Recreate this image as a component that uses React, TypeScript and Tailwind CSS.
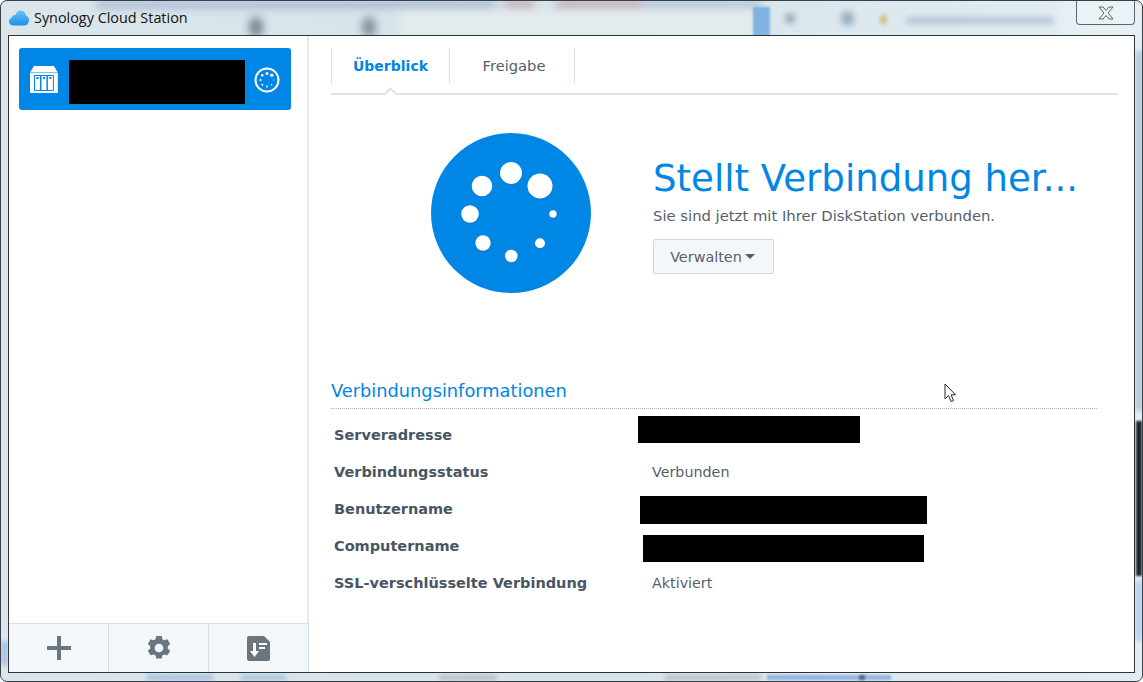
import { ReactNode } from 'react';

const Row = ({ label, children }: { label: string; children: ReactNode }) => (
  <div className="flex h-[37px] items-center">
    <span className="w-[321px] pl-[3px] text-[14.5px] font-bold text-[#4a5563]">{label}</span>
    {children}
  </div>
);

const Redact = ({ className }: { className: string }) => <div className={`self-start bg-black ${className}`} />;

const Spinner = () => (
  <svg viewBox="0 0 160 160" className="h-40 w-40">
    <circle cx="80" cy="80" r="80" fill="#0086e5" />
    {[
      [80, 40, 11],
      [109, 53, 12.5],
      [51, 53, 10.3],
      [39, 81, 8.8],
      [52, 110, 7.7],
      [80.3, 123, 6.3],
      [109, 110.3, 5],
      [122, 81, 3.7],
    ].map(([x, y, r]) => (
      <g key={`${x}-${y}`}>
        <circle cx={x} cy={y + 1} r={r} fill="#0068b4" opacity="0.55" />
        <circle cx={x} cy={y} r={r} fill="#fff" />
      </g>
    ))}
  </svg>
);

const NasIcon = () => (
  <svg viewBox="0 0 28 27" className="h-[27px] w-7">
    <path d="M4 0h20l4 6.500H0z" fill="#fff" />
    <rect y="7" width="28" height="20" fill="#fff" />
    <rect x="4" y="9" width="20" height="16" fill="#0086e5" />
    {[5, 11.500, 18].map((x) => (
      <g key={x}>
        <rect x={x} y="10" width="5" height="14" fill="#fff" />
        <rect x={x + 1.5} y="11" width="2" height="2" fill="#0086e5" />
      </g>
    ))}
  </svg>
);

const SmallSpinner = () => (
  <svg viewBox="0 0 26 26" className="h-[26px] w-[26px]">
    <circle cx="13" cy="13" r="11.5" fill="none" stroke="#fff" strokeWidth="2" />
    {[
      [13, 6.5, 1.5],
      [17.8, 8.2, 1.6],
      [8.2, 8.2, 1.3],
      [6.5, 13, 1.1],
      [8.4, 17.8, 1],
      [13, 19.5, 0.9],
      [17.6, 17.8, 0.8],
      [19.4, 13, 0.6],
    ].map(([x, y, r]) => (
      <circle key={`${x}-${y}`} cx={x} cy={y} r={r} fill="#fff" />
    ))}
  </svg>
);

const CloudIcon = () => (
  <svg viewBox="0 0 20 16" className="h-4 w-5">
    <defs>
      <linearGradient id="cloud" x1="0" y1="0" x2="0" y2="1">
        <stop offset="0" stopColor="#6cc0f5" />
        <stop offset="1" stopColor="#1d8fe6" />
      </linearGradient>
    </defs>
    <path
      d="M4 15.500C1.600 15.500 0 13.800 0 11.600c0-1.800 1-3.200 2.600-3.700C3 5.900 4.600 4.800 6.400 5 7.200 2.300 9.300.5 11.800.5c2.700 0 4.800 2 5 4.700 1.900.6 3.200 2.400 3.200 4.700 0 3.200-2.200 5.600-5 5.600z"
      fill="url(#cloud)"
    />
  </svg>
);

const ToolButton = ({ children }: { children: ReactNode }) => (
  <div className="flex h-full w-[100px] shrink-0 items-center justify-center border-r border-[#d5e0ea]">{children}</div>
);

export default function App() {
  return (
    <div className="relative flex h-[682px] w-[1143px] flex-col overflow-hidden rounded-[7px] border border-[#3a4046] bg-gradient-to-r from-[#dbe6ec] via-[#d6e3ea] to-[#e2edf3] font-['DejaVu_Sans',sans-serif]">
      {/* blurred desktop behind the glass frame */}
      <div className="absolute left-[95px] top-0 h-[7px] w-[400px] bg-[#7f97bd] opacity-60 blur-[4px]" />
      <div className="absolute left-[503px] top-0 h-[7px] w-[30px] bg-[#a8606c] opacity-50 blur-[4px]" />
      <div className="absolute left-[555px] top-0 h-[7px] w-[87px] bg-[#a8606c] opacity-50 blur-[4px]" />
      <div className="absolute left-[642px] top-0 h-[7px] w-[120px] bg-[#8aa7c9] opacity-60 blur-[4px]" />
      <div className="absolute left-[400px] top-[10px] h-[24px] w-[352px] bg-[#eef1ee] opacity-60 blur-[5px]" />
      <div className="absolute left-[248px] top-[16px] h-[20px] w-[14px] rounded-full bg-[#3c4a58] opacity-60 blur-[4px]" />
      <div className="absolute left-[361px] top-[16px] h-[20px] w-[14px] rounded-full bg-[#4b5a66] opacity-60 blur-[4px]" />
      <div className="absolute left-[752px] top-[6px] h-[30px] w-[17px] bg-[#78aee0] opacity-90 blur-[1px]" />
      <div className="absolute left-[784px] top-[13px] h-[9px] w-[10px] rounded-full bg-[#6b7f92] opacity-70 blur-[3px]" />
      <div className="absolute left-[840px] top-[10px] h-[15px] w-[13px] rounded-full bg-[#7b98ae] opacity-70 blur-[3px]" />
      <div className="absolute left-[879px] top-[14px] h-[9px] w-[7px] rounded-full bg-[#c9b452] opacity-80 blur-[2px]" />
      <div className="absolute left-[905px] top-[17px] h-[5px] w-[148px] rounded-full bg-[#7d96b8] opacity-60 blur-[3px]" />
      <div className="absolute left-[1060px] top-0 h-[36px] w-[80px] bg-[#eef3f5] opacity-60 blur-[6px]" />
      <div className="absolute bottom-[1px] left-[146px] h-[5px] w-[66px] bg-[#8fb6dc] opacity-80 blur-[2px]" />
      <div className="absolute bottom-[1px] left-[240px] h-[5px] w-[45px] bg-[#8fb6dc] opacity-70 blur-[2px]" />
      <div className="absolute bottom-[1px] left-[438px] h-[5px] w-[58px] bg-[#a9b0b4] opacity-70 blur-[2px]" />
      <div className="absolute bottom-[1px] left-[664px] h-[5px] w-[96px] bg-[#a9b0b4] opacity-70 blur-[2px]" />
      <div className="absolute bottom-[1px] left-[766px] h-[5px] w-[124px] bg-[#8fb0de] opacity-90 blur-[1px]" />
      <div className="absolute bottom-[1px] left-[858px] h-[5px] w-[6px] bg-[#4a5560] opacity-80 blur-[1px]" />
      <div className="absolute right-0 top-[50px] h-[360px] w-[6px] bg-[#9db3cc] opacity-70 blur-[2px]" />
      <div className="absolute right-0 top-[420px] h-[155px] w-[6px] bg-[#20262f] blur-[1px]" />
      <div className="absolute right-0 top-[580px] h-[60px] w-[6px] bg-[#a9c6ea] opacity-80 blur-[2px]" />
      <div className="absolute left-0 top-[640px] h-[24px] w-[7px] bg-[#8fb6dc] opacity-70 blur-[2px]" />

      <div className="relative flex h-[34px] shrink-0 items-start justify-between pl-[8px] pr-[7px]">
        <div className="flex h-full items-center gap-[5px]">
          <CloudIcon />
          <span className="font-['Open_Sans',sans-serif] text-[14.4px] text-[#111]">Synology Cloud Station</span>
        </div>
        <div className="flex h-[24px] w-[59px] items-center justify-center rounded-b-[4px] border border-t-0 border-[#5a6672] bg-white/10">
          <svg viewBox="0 0 16 14" className="h-[14px] w-[16px]">
            <path
              d="M1 1h4l3 3.500L11 1h4l-5 6 5 6h-4L8 9.500 5 13H1l5-6z"
              fill="#eef2f5"
              stroke="#59636d"
              strokeWidth="1"
            />
          </svg>
        </div>
      </div>

      <div className="relative mx-[7px] mb-[8px] flex min-h-0 flex-1 border border-[#2e3338] bg-white">
        <aside className="flex w-[300px] shrink-0 flex-col">
          <div className="flex-1 border-r-2 border-[#e6e8ea] px-[10px] pt-[12px]">
            <div className="flex h-[62px] w-[272px] items-center rounded-[3px] bg-[#0086e5] px-[11px]">
              <NasIcon />
              <div className="ml-[11px] mt-[6px] h-[44px] w-[177px] bg-black" />
              <div className="ml-[9px] mt-[1px]">
                <SmallSpinner />
              </div>
            </div>
          </div>
          <div className="flex h-[49px] border-t border-[#d5e0ea] bg-[#f3f7fa]">
            <ToolButton>
              <svg viewBox="0 0 26 26" className="h-[26px] w-[26px]">
                <path d="M11 1h4v10h10v4H15v10h-4V15H1v-4h10z" fill="#6b7580" />
              </svg>
            </ToolButton>
            <ToolButton>
              <svg viewBox="0 0 24 24" className="h-[26px] w-[26px]">
                <path
                  fillRule="evenodd"
                  d="M9.500 1h5l.7 3c.6.2 1.200.5 1.700.9l2.900-.9 2.500 4.300-2.200 2.100a7 7 0 0 1 0 2l2.200 2.100-2.500 4.300-2.900-.9c-.5.400-1.100.7-1.700.9l-.7 3h-5l-.7-3c-.6-.2-1.200-.5-1.700-.9l-2.900.9-2.500-4.300 2.200-2.100a7 7 0 0 1 0-2L1.700 8.300 4.200 4l2.900.9c.5-.4 1.100-.7 1.700-.9zM12 8a4 4 0 1 0 0 8 4 4 0 0 0 0-8z"
                  fill="#6b7580"
                />
              </svg>
            </ToolButton>
            <ToolButton>
              <svg viewBox="0 0 24 25" className="h-[25px] w-[24px]">
                <path d="M2 0h15l6 6v17a2 2 0 0 1-2 2H2a2 2 0 0 1-2-2V2a2 2 0 0 1 2-2z" fill="#6b7580" />
                <path d="M6 7h3v8h3l-4.500 6L3 15h3z" fill="#fff" />
                <rect x="12" y="7" width="8" height="2" fill="#fff" />
                <rect x="12" y="11" width="6" height="2" fill="#fff" />
              </svg>
            </ToolButton>
          </div>
        </aside>

        <main className="relative flex-1 pl-[22px] pr-[16px] pt-[12px]">
          <div className="relative flex h-[34px]">
            <div className="flex h-[35px] w-[119px] items-center justify-center border-x border-[#d5dfe8] pt-[2px] text-[14px] font-bold text-[#0086e5]">
              Überblick
            </div>
            <div className="flex h-[35px] w-[125px] items-center justify-center border-r border-[#d5dfe8] pl-[4px] pt-[1px] text-[14.7px] text-[#555f6b]">
              Freigabe
            </div>
          </div>
          <div className="relative mt-[11px] h-[2px] bg-[#e2e4e6]">
            <div className="absolute left-[55px] top-[-4px] h-[9px] w-[9px] rotate-45 border-l-2 border-t-2 border-[#e2e4e6] bg-white" />
          </div>

          <div className="mt-[38px] flex pl-[100px]">
            <Spinner />
            <div className="ml-[62px] pt-[24px]">
              <h1 className="text-[37.1px] leading-[44px] text-[#0086e5]">Stellt Verbindung her...</h1>
              <p className="mt-[5px] text-[14.8px] leading-[20px] text-[#555f6b]">
                Sie sind jetzt mit Ihrer DiskStation verbunden.
              </p>
              <button className="mt-[13px] flex h-[35px] w-[121px] items-center justify-center gap-[3px] rounded-[2px] border border-[#ced9e4] bg-[#f3f7fa] pr-[2px] pt-[2px] text-[14.4px] text-[#555f6b]">
                Verwalten
                <span className="mb-[3px] h-0 w-0 border-x-[5px] border-t-[5px] border-x-transparent border-t-[#555f6b]" />
              </button>
            </div>
          </div>

          <h2 className="mt-[85px] w-[766px] border-b border-dotted border-[#b4b8bc] pb-[4px] text-[17.8px] leading-[26px] text-[#0086e5]">
            Verbindungsinformationen
          </h2>
          <div className="mt-[8px]">
            <Row label="Serveradresse">
              <Redact className="ml-[-14px] mt-[-1px] h-[27px] w-[222px]" />
            </Row>
            <Row label="Verbindungsstatus">
              <span className="text-[14.3px] text-[#555f6b]">Verbunden</span>
            </Row>
            <Row label="Benutzername">
              <Redact className="ml-[-12px] mt-[5px] h-[28px] w-[287px]" />
            </Row>
            <Row label="Computername">
              <Redact className="ml-[-9px] mt-[7px] h-[27px] w-[281px]" />
            </Row>
            <Row label="SSL-verschlüsselte Verbindung">
              <span className="text-[14.3px] text-[#555f6b]">Aktiviert</span>
            </Row>
          </div>

          <svg viewBox="0 0 12 20" className="absolute left-[635px] top-[347px] h-5 w-3">
            <path
              d="M1 1v15l3.500-3.400L7 18.500l2.500-1-2.400-5.700H11.500z"
              fill="#fff"
              stroke="#23263a"
              strokeWidth="1"
              strokeLinejoin="miter"
            />
          </svg>
        </main>
      </div>
    </div>
  );
}
